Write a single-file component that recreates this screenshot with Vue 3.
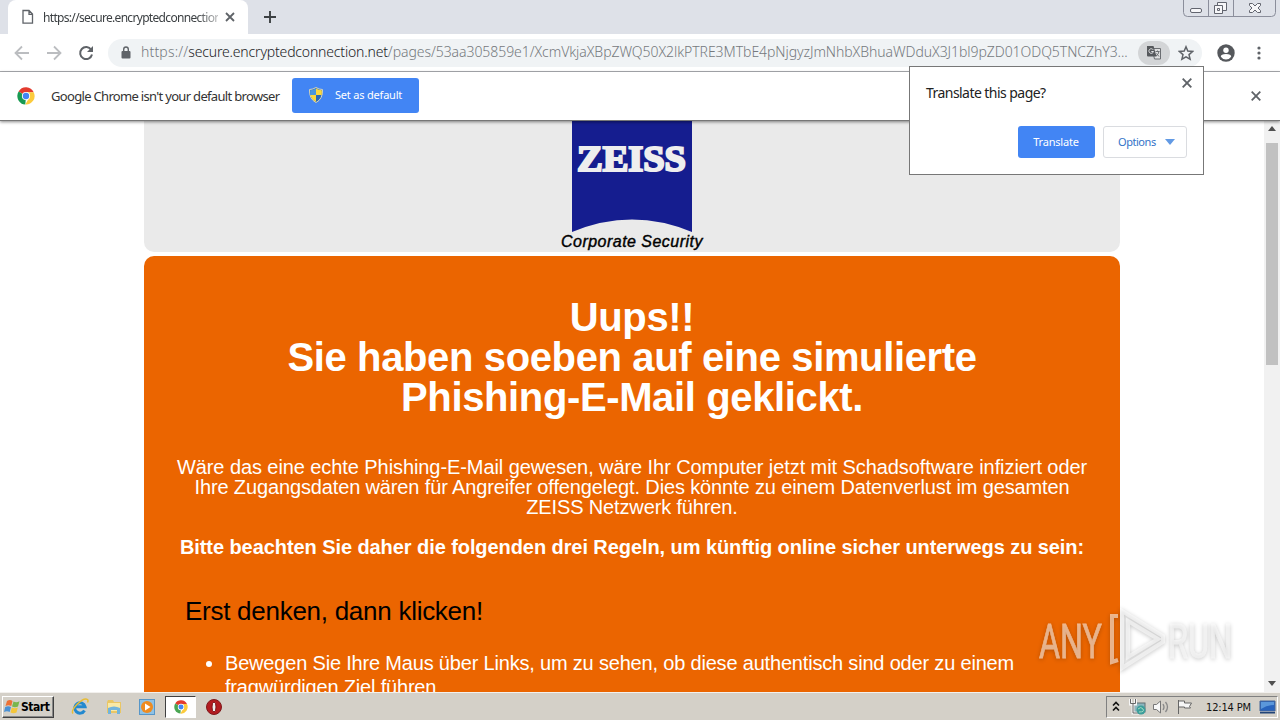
<!-- Browser window with a phishing awareness page, on a classic desktop -->
<template>
  <div class="screen">
    <header class="tabs">
      <div class="tab">
        <svg class="page-icon" width="12" height="16" viewBox="0 0 12 16" fill="none" stroke="#5f6368" stroke-width="1.3">
          <path d="M1 1.5h6l3.5 3.6v9H1zM7 1.5v3.8h3.5" />
        </svg>
        <span class="tab-title">https://secure.encryptedconnection</span>
        <svg class="tab-close" width="10" height="10" viewBox="0 0 10 10" stroke="#5f6368" stroke-width="1.8">
          <path d="M1 1l8 8M9 1L1 9" />
        </svg>
      </div>
      <svg class="plus" width="12" height="12" viewBox="0 0 12 12" stroke="#3c4043" stroke-width="1.9">
        <path d="M6 0v12M0 6h12" />
      </svg>
      <svg class="window-buttons" width="94" height="18" viewBox="0 0 94 18" fill="none" stroke="#8b8e9b">
        <path d="M.5 0v12.5q0 4 4 4h84q4 0 4-4V0M25.500 0v16M50.500 0v16" />
        <g stroke="#62656f" fill="#f6f6f8">
          <rect x="7.500" y="8.500" width="11" height="4" rx="1.500" />
          <path d="M34.500 2.500h9v8h-9z" />
          <path d="M31.500 5.500h8v8h-8zM34.500 8.500h2v2h-2z" />
          <path d="M66.500 3.500h3l2.500 2.500 2.500-2.500h3v2l-2.500 2.500 2.500 2.500v2h-3l-2.500-2.500-2.500 2.500h-3v-2l2.500-2.500-2.500-2.500z" />
        </g>
      </svg>
    </header>

    <nav class="toolbar">
      <svg class="nav-icons" width="100" height="36" viewBox="0 0 100 36" fill="none" stroke="#bbbdc0" stroke-width="1.8">
        <path d="M29 18H16M22 11.500L15.500 18l6.500 6.500" />
        <path d="M47 18h13M54 11.500l6.500 6.500-6.500 6.500" />
        <path d="M91.200 14.800A6 6 0 1 0 92 19.500" stroke="#5f6368" stroke-width="2" />
        <path d="M93 11v6h-6z" fill="#5f6368" stroke="none" />
      </svg>
      <div class="omnibox">
        <svg class="lock" width="10" height="13" viewBox="0 0 10 13">
          <rect x=".5" y="5" width="9" height="7.500" rx="1" fill="#5f6368" />
          <path d="M2.700 5V3.300a2.300 2.300 0 0 1 4.600 0V5" fill="none" stroke="#5f6368" stroke-width="1.400" />
        </svg>
        <div class="url">
          <span class="scheme">https://</span><span class="host">secure.encryptedconnection.net</span><span class="path">/pages/53aa305859e1/XcmVkjaXBpZWQ50X2lkPTRE3MTbE4pNjgyzJmNhbXBhuaWDduX3J1bl9pZD01ODQ5TNCZhY3...</span>
        </div>
        <div class="translate-badge">
          <svg width="16" height="16" viewBox="0 0 16 16">
            <path d="M6 3.500h8.500v10.500H8.500z" fill="#dedfe0" stroke="#6b6e72" />
            <path d="M1 1h6.500l3 10.500H2a1 1 0 0 1-1-1z" fill="#55585c" />
            <path d="M7.200 4.800A2.300 2.300 0 1 0 7.500 6.500H5.300" fill="none" stroke="#e3e4e6" stroke-width="1" />
            <path d="M9.500 6.500h4M11.500 5.500v1M13 6.500q-.5 3-3 4.500M10.500 8.500l2.500 3" fill="none" stroke="#6b6e72" />
          </svg>
        </div>
        <svg class="star" width="16" height="16" viewBox="0 0 16 16" fill="none" stroke="#5f6368" stroke-width="1.500">
          <path d="M8 1.800l1.800 4.300 4.700.4L11 9.600l1.100 4.600L8 11.800l-4.100 2.400L5 9.600 1.500 6.500l4.700-.4z" />
        </svg>
      </div>
      <svg class="avatar" width="18" height="18" viewBox="0 0 18 18">
        <circle cx="9" cy="9" r="8.700" fill="#55585c" />
        <circle cx="9" cy="6.200" r="2.700" fill="#fff" />
        <path d="M3.800 12.700q0-2.700 5.200-2.700t5.200 2.700Q12.300 15.500 9 15.500t-5.200-2.800" fill="#fff" />
      </svg>
      <svg class="dots" width="4" height="14" viewBox="0 0 4 14" fill="#5f6368">
        <circle cx="2" cy="2" r="1.600" /><circle cx="2" cy="7" r="1.600" /><circle cx="2" cy="12" r="1.600" />
      </svg>
    </nav>

    <div class="infobar">
      <svg class="chrome-logo" width="18" height="18" viewBox="0 0 18 18">
        <path d="M9 9L1.600 4.500A8.500 8.500 0 0 1 16.700 5.300H9z" fill="#e33b2e" />
        <path d="M9 9l-7.400-4.500A8.500 8.500 0 0 0 8.300 17.500z" fill="#189a52" />
        <path d="M9 9V5.300h7.700A8.500 8.500 0 0 1 8.300 17.500L12 11z" fill="#fccb3d" />
        <circle cx="9" cy="9" r="4.100" fill="#fff" /><circle cx="9" cy="9" r="3.200" fill="#4285f4" />
      </svg>
      <span class="info-text">Google Chrome isn't your default browser</span>
      <button class="blue default-button">
        <svg width="14" height="16" viewBox="0 0 14 16">
          <path d="M7 .5Q10 2.500 13.500 2.500 14 12 7 15.500 0 12 .5 2.500 4 2.500 7 .5z" fill="#2b69b4" stroke="#d9d6b8" />
          <path d="M7 1.500v6.500H1.300Q1 6 1.200 3.200 4.500 3.200 7 1.500z" fill="#4a97dc" />
          <path d="M7 1.500q2.500 1.700 5.800 1.700Q13 6 12.700 8H7zM7 8v6.800Q2.500 12.500 1.300 8z" fill="#fbd83c" />
        </svg>
        <span>Set as default</span>
      </button>
      <svg class="info-close" width="10" height="10" viewBox="0 0 10 10" stroke="#5f6368" stroke-width="1.800">
        <path d="M.7.700l8.600 8.600M9.300.700L.7 9.300" />
      </svg>
    </div>

    <main class="viewport">
      <div class="page">
        <section class="brand">
          <svg class="zeiss" width="120" height="112" viewBox="0 0 120 112">
            <path d="M0 0h120v112Q60 87 0 112z" fill="#151d8f" />
            <text x="5" y="51" textLength="109" lengthAdjust="spacingAndGlyphs">ZEISS</text>
          </svg>
          <em>Corporate Security</em>
        </section>
        <section class="warning">
          <h1>Uups!!<br />Sie haben soeben auf eine simulierte<br />Phishing-E-Mail geklickt.</h1>
          <p class="intro">
            <span v-for="line in introLines" :key="line">{{ line }}</span>
          </p>
          <p class="rules">Bitte beachten Sie daher die folgenden drei Regeln, um künftig online sicher unterwegs zu sein:</p>
          <h2>Erst denken, dann klicken!</h2>
          <ul>
            <li>Bewegen Sie Ihre Maus über Links, um zu sehen, ob diese authentisch sind oder zu einem<br />fragwürdigen Ziel führen</li>
          </ul>
        </section>
      </div>
      <div class="scrollbar">
        <i class="up"></i>
        <div class="thumb"></div>
        <i class="down"></i>
      </div>
    </main>

    <footer class="taskbar">
      <button class="start">
        <svg width="17" height="16" viewBox="0 0 17 16">
          <path d="M3 2q3-2 5.500 0L7.300 7Q4.500 5.500 1.500 7z" fill="#ed7135" />
          <path d="M9.500 2.500q3 1.500 6-.3L14 7.500q-3 1.500-6 0z" fill="#79b64c" />
          <path d="M1.200 8q3-1.500 5.800 0L5.700 13Q3 11.500 0 13z" fill="#4b91d4" />
          <path d="M7.800 8.500q3 1.500 6-.1L12.500 13.500q-3 1.500-6 0z" fill="#f4c63b" />
        </svg>
        <span>Start</span>
      </button>
      <div class="launch">
        <svg width="18" height="18" viewBox="0 0 18 18" fill="none">
          <path d="M13.500 12.500A5.200 5.200 0 1 1 14 8.700H5" stroke="#2389cf" stroke-width="3" />
          <path d="M2 15.500C-1 12 12-1.500 16.500 1.500q1 1 0 3" stroke="#e8bd35" stroke-width="1.500" />
        </svg>
      </div>
      <div class="launch">
        <svg width="18" height="18" viewBox="0 0 18 18">
          <path d="M2 4l1-2h5l1 2h7v11H2z" fill="#e9c665" />
          <path d="M3 5h12v8H3z" fill="#f9e9a6" />
          <path d="M3 10q6-3 12 0v6h-3v-4H6v4H3z" fill="#72b4dc" />
        </svg>
      </div>
      <div class="launch">
        <svg width="18" height="18" viewBox="0 0 18 18">
          <rect x="1.500" y="1.500" width="15" height="15" fill="#8fc2e5" stroke="#5796c8" />
          <circle cx="9" cy="9" r="6" fill="#ee8b20" /><path d="M7 5.500l5.500 3.500L7 12.500z" fill="#fff" />
        </svg>
      </div>
      <div class="launch active">
        <svg width="14" height="14" viewBox="0 0 18 18">
          <path d="M9 9L1.600 4.500A8.500 8.500 0 0 1 16.700 5.300H9z" fill="#e33b2e" />
          <path d="M9 9l-7.400-4.500A8.500 8.500 0 0 0 8.300 17.500z" fill="#4aa653" />
          <path d="M9 9V5.300h7.700A8.500 8.500 0 0 1 8.300 17.500L12 11z" fill="#fccb3d" />
          <circle cx="9" cy="9" r="4.100" fill="#fff" /><circle cx="9" cy="9" r="3.200" fill="#4285f4" />
        </svg>
      </div>
      <div class="launch">
        <svg width="18" height="18" viewBox="0 0 18 18">
          <circle cx="9" cy="9" r="7.500" fill="#b31b20" stroke="#7f191c" />
          <ellipse cx="9" cy="9" rx="2" ry="5" fill="#eee" stroke="#801015" />
        </svg>
      </div>
      <div class="tray">
        <svg width="90" height="20" viewBox="0 0 90 20" fill="none">
          <path d="M6 8.500l3-3 3 3M6 13.500l3-3 3 3" stroke="#111" stroke-width="1.600" />
          <rect x="27" y="6" width="11" height="9" fill="#8ab6be" stroke="#636f73" />
          <path d="M23.500 2v5h5V2M26 7v9h6" stroke="#f5f5f5" stroke-width="3" />
          <path d="M23.500 2v4.500h5V2M26 7v9h6" stroke="#666" />
          <circle cx="34" cy="13" r="4.500" fill="#3c9e9b" /><path d="M31 12q3-3 5 0t-4 3" stroke="#a5dcc2" />
          <path d="M46.500 7.500h3L53.500 4v12l-4-3.500h-3z" fill="#f8f8f8" stroke="#777" />
          <path d="M56 7q2 3 0 6M58.500 5q4 5 0 10" stroke="#888" stroke-width="1.300" />
          <path d="M71.500 3v14M71.500 4h6v2h7l-2 3.500 1 1.500h-6V10h-6" fill="#f6f6f6" stroke="#666" />
        </svg>
        <span class="clock">12:14 PM</span>
        <svg class="desktop" width="17" height="14" viewBox="0 0 17 14">
          <path d="M1 1h15v10H1z" fill="#2863bd" stroke="#476697" />
          <path d="M2 2h13v3Q8 5 2 9z" fill="#5b97db" /><path d="M1 12h15v1.500H1z" fill="#224477" />
        </svg>
      </div>
    </footer>

    <aside class="popup">
      <span class="popup-title">Translate this page?</span>
      <svg class="popup-close" width="10" height="10" viewBox="0 0 10 10" stroke="#5f6368" stroke-width="1.900">
        <path d="M.7.700l8.600 8.600M9.300.700L.7 9.300" />
      </svg>
      <div class="popup-actions">
        <button class="blue translate-button"><span>Translate</span></button>
        <button class="options-button"><span>Options</span><i></i></button>
      </div>
    </aside>

    <!-- Translucent service watermark -->
    <svg class="watermark" width="230" height="80" viewBox="0 0 230 80">
      <g class="mark">
        <text x="9" y="50" textLength="63" lengthAdjust="spacingAndGlyphs">ANY</text>
        <text x="138" y="50" textLength="64" lengthAdjust="spacingAndGlyphs">RUN</text>
        <path d="M88 8h-6v46l6-2M92 3l41 25v6L92 60zM98 13v36l30-18z" />
      </g>
    </svg>
  </div>
</template>

<script setup>
const introLines = [
  "Wäre das eine echte Phishing-E-Mail gewesen, wäre Ihr Computer jetzt mit Schadsoftware infiziert oder",
  "Ihre Zugangsdaten wären für Angreifer offengelegt. Dies könnte zu einem Datenverlust im gesamten",
  "ZEISS Netzwerk führen.",
];
</script>

<style>
body {
  overflow: hidden;
}
</style>

<style scoped>
* {
  box-sizing: border-box;
}
.screen {
  position: relative;
  display: flex;
  flex-direction: column;
  width: 1280px;
  height: 720px;
  overflow: hidden;
  background: #fff;
  font-family: "Noto Sans", sans-serif;
  white-space: nowrap;
}
svg {
  display: block;
  flex: none;
}
button {
  display: flex;
  align-items: center;
  margin: 0;
  font-family: inherit;
}
.tabs {
  display: flex;
  height: 34px;
  flex: none;
  background: #dee1e8;
}
.tab {
  display: flex;
  align-items: center;
  width: 240px;
  margin-left: 8px;
  padding-left: 14px;
  background: #fff;
  border-radius: 8px 8px 0 0;
}
.tab-title {
  width: 175px;
  margin-left: 9px;
  color: #3c4043;
  font-size: 12px;
  letter-spacing: -0.68px;
  mask-image: linear-gradient(90deg, #000 88%, #0005);
}
.tab-close {
  margin-left: 7px;
}
.plus {
  margin: 11px 0 0 16px;
}
.window-buttons {
  margin-left: auto;
  margin-right: 3px;
}
.toolbar {
  display: flex;
  align-items: center;
  flex: none;
  height: 38px;
  border-bottom: 1px solid #acaeb2;
}
.omnibox {
  display: flex;
  align-items: center;
  width: 1094px;
  height: 28px;
  margin-left: 8px;
  padding-left: 13px;
  background: #f0f3f5;
  border-radius: 14px;
}
.url {
  width: 990px;
  margin-left: 10px;
  margin-top: -2px;
  font-size: 14px;
  font-weight: 300;
}
.scheme,
.path {
  color: #75797d;
}
.scheme {
  letter-spacing: 0.17px;
}
.host {
  color: #202124;
  letter-spacing: -0.17px;
}
.path {
  letter-spacing: -0.06px;
}
.translate-badge {
  display: flex;
  align-items: center;
  justify-content: center;
  width: 32px;
  height: 24px;
  margin-left: 7px;
  border-radius: 12px;
  background: #d3d5d7;
}
.star {
  margin-left: 8px;
}
.avatar {
  margin-left: 15px;
}
.dots {
  margin-left: 22px;
}
.infobar {
  position: relative;
  display: flex;
  align-items: center;
  height: 49px;
  flex: none;
  padding-left: 17px;
  padding-bottom: 1px;
  border-bottom: 1px solid #777;
  box-shadow: 0 1px 3px #0007;
  background: #fff;
  z-index: 1;
}
.info-text {
  width: 229px;
  margin-left: 16px;
  color: #333;
  font-size: 13px;
  letter-spacing: -0.68px;
}
.blue {
  border: 0;
  border-radius: 3px;
  background: #4285f4;
  color: #fff;
}
.default-button {
  width: 127px;
  height: 35px;
  margin-left: 12px;
  padding: 0 0 2px 17px;
  font-size: 11px;
  letter-spacing: -0.2px;
}
.default-button span {
  margin-left: 12px;
}
.info-close {
  margin-left: auto;
  margin-right: 19px;
}
.viewport {
  display: flex;
  height: 571px;
  flex: none;
  overflow: hidden;
}
.page {
  width: 976px;
  margin-left: 144px;
  font-family: "Liberation Sans", Arial, sans-serif;
}
.brand {
  display: flex;
  flex-direction: column;
  align-items: center;
  height: 131px;
  background: #eaeaea;
  border-radius: 0 0 10px 10px;
}
.brand em {
  color: #000;
  font-size: 16px;
  line-height: 20px;
  letter-spacing: 0.47px;
  -webkit-text-stroke: 0.4px #000;
}
.zeiss {
  margin-top: -1px;
}
.zeiss text {
  fill: #eee;
  stroke: #eee;
  stroke-width: 2.2px;
  font-family: "Liberation Serif", serif;
  font-size: 36px;
  font-weight: bold;
}
.warning {
  height: 540px;
  margin-top: 4px;
  padding-top: 41px;
  color: #fff;
  background: #eb6500;
  border-radius: 10px 10px 0 0;
}
h1 {
  margin: 0;
  text-align: center;
  font-size: 40px;
  line-height: 40px;
  letter-spacing: -0.37px;
}
.intro {
  display: flex;
  flex-direction: column;
  align-items: center;
  margin: 40px 0 0;
  font-size: 20px;
  line-height: 20px;
  letter-spacing: -0.135px;
}
.intro span:first-child {
  letter-spacing: -0.08px;
}
.rules {
  margin: 20px 0 0;
  text-align: center;
  font-size: 20px;
  font-weight: bold;
  line-height: 20px;
  letter-spacing: -0.075px;
}
h2 {
  margin: 39px 0 0 41px;
  color: #000;
  font-size: 26px;
  font-weight: normal;
  line-height: 30px;
  letter-spacing: -0.27px;
}
ul {
  margin: 25px 0 0;
  padding-left: 81px;
  font-size: 20px;
  line-height: 24px;
  letter-spacing: -0.185px;
}
.scrollbar {
  display: flex;
  flex-direction: column;
  align-items: center;
  width: 16px;
  margin-left: auto;
  background: #f1f1f1;
}
.up,
.down {
  border: 4px solid transparent;
}
.up {
  margin-top: 1px;
  border-bottom: 5px solid #505050;
}
.thumb {
  width: 12px;
  height: 222px;
  margin-top: 12px;
  background: #c1c1c1;
}
.down {
  margin-top: auto;
  margin-bottom: 2px;
  border-top: 5px solid #505050;
}
.taskbar {
  display: flex;
  align-items: center;
  height: 28px;
  flex: none;
  padding-top: 1px;
  background: #d4d0c8;
  border-top: 1px solid #f2f0ed;
  font-family: "DejaVu Sans", sans-serif;
  font-stretch: condensed;
}
.start {
  width: 52px;
  height: 22px;
  margin-left: 2px;
  padding: 0 0 0 1px;
  background: #d4d0c8;
  border: 1px solid;
  border-color: #fff #404040 #404040 #fff;
  box-shadow: inset -1px -1px #888;
  color: #000;
  font-size: 12px;
  font-weight: bold;
  font-stretch: condensed;
  letter-spacing: -0.45px;
}
.launch {
  display: flex;
  align-items: center;
  justify-content: center;
  width: 33.7px;
  height: 22px;
}
.start + .launch {
  margin-left: 9px;
}
.launch.active {
  width: 31px;
  margin: 0 1px;
  background: #fff;
  border: 1px solid;
  border-color: #404040 #fff #fff #404040;
}
.tray {
  display: flex;
  align-items: center;
  width: 172px;
  height: 22px;
  margin-left: auto;
  margin-right: 2px;
  border: 1px solid;
  border-color: #808080 #fff #fff #808080;
}
.clock {
  width: 45px;
  margin-left: 9px;
  color: #111;
  font-size: 11px;
  letter-spacing: -0.15px;
}
.desktop {
  margin-left: 8px;
}
.popup {
  position: absolute;
  z-index: 2;
  top: 66px;
  left: 909px;
  width: 295px;
  height: 109px;
  padding: 16px;
  border: 1px solid #777;
  background: #fff;
}
.popup-title {
  display: block;
  color: #222;
  font-size: 14px;
  line-height: 20px;
  letter-spacing: -0.55px;
}
.popup-close {
  position: absolute;
  top: 11px;
  right: 11px;
}
.popup-actions {
  display: flex;
  justify-content: flex-end;
  gap: 8px;
  margin-top: 23px;
  font-size: 11px;
}
.translate-button {
  justify-content: center;
  width: 77px;
  height: 32px;
  padding: 0 1px 1px 0;
  font-size: 11px;
  letter-spacing: -0.2px;
}
.options-button {
  width: 84px;
  height: 32px;
  padding: 0 0 1px 14px;
  border: 1px solid #dadce0;
  border-radius: 3px;
  background: #fff;
  color: #3473c8;
  font-size: 11px;
  letter-spacing: -0.45px;
}
.options-button i {
  margin-left: 9px;
  border: 5px solid transparent;
  border-top: 6px solid #629ae4;
  border-bottom: 0;
}
.watermark {
  position: absolute;
  left: 1030px;
  top: 608px;
  filter: drop-shadow(0 1px 2px #0006);
}
.mark {
  fill: #fff;
  opacity: 0.55;
}
.mark text {
  stroke: #fff;
  stroke-width: 0.8px;
  font-family: Roboto, sans-serif;
  font-size: 49px;
}
.mark path {
  fill: none;
  stroke: #fff;
  stroke-width: 4px;
}
</style>
